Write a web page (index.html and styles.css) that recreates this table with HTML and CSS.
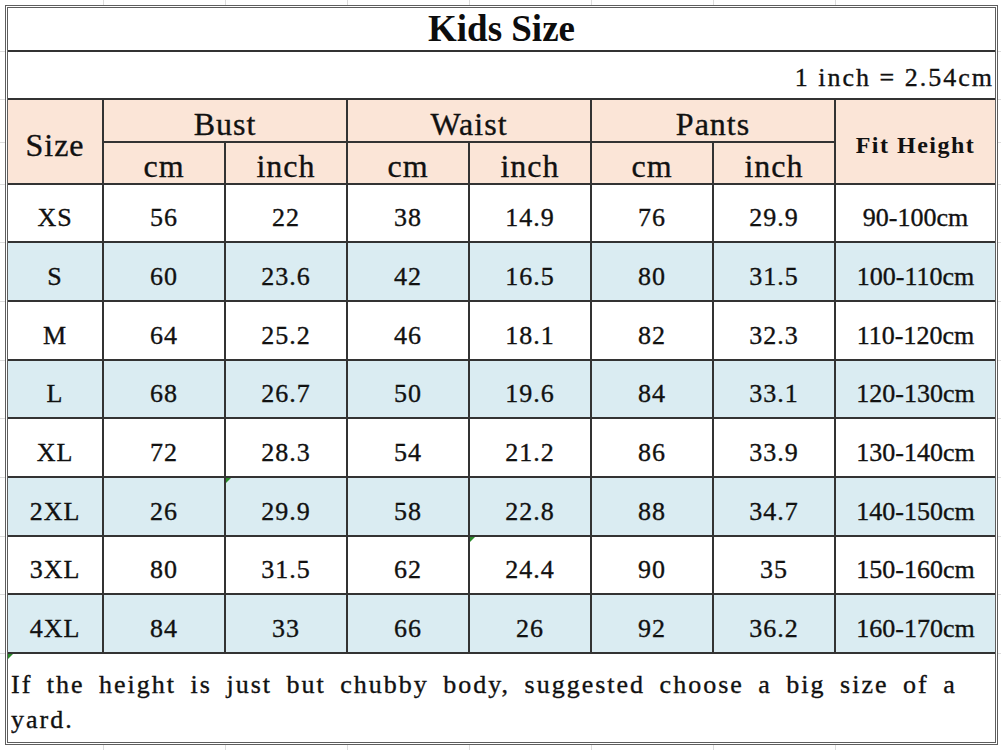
FILE: index.html
```html
<!DOCTYPE html>
<html lang="en">
<head>
<meta charset="utf-8">
<title>Kids Size</title>
<link rel="stylesheet" href="styles.css">
</head>
<body>
<div class="sheet">
  <div class="grid">
    <div class="c title">Kids Size</div>
    <div class="c note">1 inch = 2.54cm</div>

    <div class="c hd size">Size</div>
    <div class="c hd grp">Bust</div>
    <div class="c hd grp">Waist</div>
    <div class="c hd grp">Pants</div>
    <div class="c hd fit">Fit Height</div>
    <div class="c hd sub">cm</div>
    <div class="c hd sub">inch</div>
    <div class="c hd sub">cm</div>
    <div class="c hd sub">inch</div>
    <div class="c hd sub">cm</div>
    <div class="c hd sub">inch</div>

    <div class="row">
      <div class="c d">XS</div><div class="c d">56</div><div class="c d">22</div><div class="c d">38</div><div class="c d">14.9</div><div class="c d">76</div><div class="c d">29.9</div><div class="c d h">90-100cm</div>
    </div>
    <div class="row alt">
      <div class="c d">S</div><div class="c d">60</div><div class="c d">23.6</div><div class="c d">42</div><div class="c d">16.5</div><div class="c d">80</div><div class="c d">31.5</div><div class="c d h">100-110cm</div>
    </div>
    <div class="row">
      <div class="c d">M</div><div class="c d">64</div><div class="c d">25.2</div><div class="c d">46</div><div class="c d">18.1</div><div class="c d">82</div><div class="c d">32.3</div><div class="c d h">110-120cm</div>
    </div>
    <div class="row alt">
      <div class="c d">L</div><div class="c d">68</div><div class="c d">26.7</div><div class="c d">50</div><div class="c d">19.6</div><div class="c d">84</div><div class="c d">33.1</div><div class="c d h">120-130cm</div>
    </div>
    <div class="row">
      <div class="c d">XL</div><div class="c d">72</div><div class="c d">28.3</div><div class="c d">54</div><div class="c d">21.2</div><div class="c d">86</div><div class="c d">33.9</div><div class="c d h">130-140cm</div>
    </div>
    <div class="row alt">
      <div class="c d">2XL</div><div class="c d">26</div><div class="c d flag">29.9</div><div class="c d">58</div><div class="c d">22.8</div><div class="c d">88</div><div class="c d">34.7</div><div class="c d h">140-150cm</div>
    </div>
    <div class="row">
      <div class="c d">3XL</div><div class="c d">80</div><div class="c d">31.5</div><div class="c d">62</div><div class="c d flag">24.4</div><div class="c d">90</div><div class="c d">35</div><div class="c d h">150-160cm</div>
    </div>
    <div class="row alt">
      <div class="c d">4XL</div><div class="c d">84</div><div class="c d">33</div><div class="c d">66</div><div class="c d">26</div><div class="c d">92</div><div class="c d">36.2</div><div class="c d h">160-170cm</div>
    </div>

    <div class="c foot flag">If the height is just but chubby body, suggested choose a big size of a yard.</div>
  </div>
</div>
</body>
</html>
```

FILE: styles.css
```css
html, body {
  margin: 0;
  padding: 0;
}

body {
  width: 1001px;
  height: 750px;
  overflow: hidden;
  font-family: "Liberation Serif", "Times New Roman", serif;
  color: #111;
  background-color: #fff;
  background-image:
    linear-gradient(#dcdcdc, #dcdcdc), linear-gradient(#dcdcdc, #dcdcdc),
    linear-gradient(#dcdcdc, #dcdcdc), linear-gradient(#dcdcdc, #dcdcdc),
    linear-gradient(#dcdcdc, #dcdcdc), linear-gradient(#dcdcdc, #dcdcdc),
    linear-gradient(#dcdcdc, #dcdcdc),
    linear-gradient(#dcdcdc, #dcdcdc), linear-gradient(#dcdcdc, #dcdcdc),
    linear-gradient(#dcdcdc, #dcdcdc), linear-gradient(#dcdcdc, #dcdcdc),
    linear-gradient(#dcdcdc, #dcdcdc), linear-gradient(#dcdcdc, #dcdcdc),
    linear-gradient(#dcdcdc, #dcdcdc), linear-gradient(#dcdcdc, #dcdcdc),
    linear-gradient(#dcdcdc, #dcdcdc), linear-gradient(#dcdcdc, #dcdcdc),
    linear-gradient(#dcdcdc, #dcdcdc), linear-gradient(#dcdcdc, #dcdcdc);
  background-repeat: no-repeat;
  background-size:
    1px 100%, 1px 100%, 1px 100%, 1px 100%, 1px 100%, 1px 100%, 1px 100%,
    100% 1px, 100% 1px, 100% 1px, 100% 1px, 100% 1px, 100% 1px,
    100% 1px, 100% 1px, 100% 1px, 100% 1px, 100% 1px, 100% 1px;
  background-position:
    103px 0, 225px 0, 347px 0, 469px 0, 591px 0, 713px 0, 835px 0,
    0 51px, 0 99px, 0 142px, 0 184px, 0 242px, 0 301px,
    0 360px, 0 418px, 0 477px, 0 536px, 0 594px, 0 653px;
}

.sheet {
  margin: 5px 0 0 5px;
  width: 987px;
  border: 3px double #5e5e5e;
  background: #fff;
}

.grid {
  display: grid;
  grid-template-columns: 94px repeat(6, 120px) 159px;
  grid-template-rows: 42px 46px 41px 40px 56px 57px 57px 56px 57px 57px 56px 57px 88px;
  gap: 2px;
  background: #333;
}

.row {
  display: contents;
}

.c {
  background: #fff;
  display: flex;
  align-items: center;
  justify-content: center;
  white-space: nowrap;
  box-sizing: border-box;
  -webkit-text-stroke: 0.35px #111;
}

.title {
  grid-column: 1 / -1;
  font-size: 37px;
  font-weight: bold;
  line-height: 42px;
  color: #0d0d0d;
  -webkit-text-stroke: 0;
}

.note {
  grid-column: 1 / -1;
  justify-content: flex-end;
  align-items: flex-end;
  font-size: 26px;
  line-height: 30px;
  letter-spacing: 2px;
  padding: 0 1px 5px 0;
}

.hd {
  background: #fbe5d7;
  font-size: 32px;
  line-height: 36px;
  letter-spacing: 1px;
}

.size {
  grid-row: span 2;
  padding-top: 7px;
}

.grp {
  grid-column: span 2;
  padding-top: 7px;
}

.sub {
  padding-top: 6px;
}

.fit {
  grid-row: span 2;
  font-size: 24px;
  font-weight: bold;
  line-height: 28px;
  letter-spacing: 1.5px;
  padding-top: 7px;
  -webkit-text-stroke: 0;
}

.d {
  font-size: 26px;
  line-height: 30px;
  letter-spacing: 1px;
  padding-top: 10px;
}

.d.h {
  letter-spacing: 0;
}

.row.alt > .c {
  background: #daecf2;
}

.foot {
  grid-column: 1 / -1;
  display: block;
  white-space: normal;
  font-size: 26px;
  line-height: 35px;
  letter-spacing: 2px;
  word-spacing: 6px;
  padding: 13px 8px 0 3px;
}

.flag {
  position: relative;
}

.flag::before {
  content: "";
  position: absolute;
  left: 0;
  top: 0;
  border-top: 5px solid #2a8a2a;
  border-right: 5px solid transparent;
}
```
